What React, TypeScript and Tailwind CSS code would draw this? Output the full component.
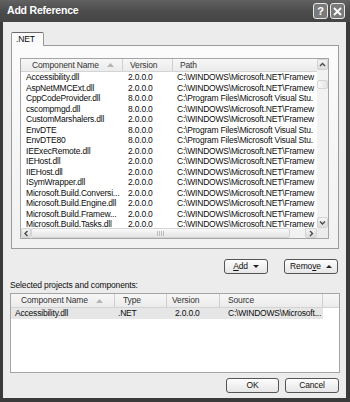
import React from "react";

const refs: [string, string, string][] = [
  ["Accessibility.dll", "2.0.0.0", "C:\\WINDOWS\\Microsoft.NET\\Framew"],
  ["AspNetMMCExt.dll", "2.0.0.0", "C:\\WINDOWS\\Microsoft.NET\\Framew"],
  ["CppCodeProvider.dll", "8.0.0.0", "C:\\Program Files\\Microsoft Visual Stu."],
  ["cscompmgd.dll", "8.0.0.0", "C:\\WINDOWS\\Microsoft.NET\\Framew"],
  ["CustomMarshalers.dll", "2.0.0.0", "C:\\WINDOWS\\Microsoft.NET\\Framew"],
  ["EnvDTE", "8.0.0.0", "C:\\Program Files\\Microsoft Visual Stu."],
  ["EnvDTE80", "8.0.0.0", "C:\\Program Files\\Microsoft Visual Stu."],
  ["IEExecRemote.dll", "2.0.0.0", "C:\\WINDOWS\\Microsoft.NET\\Framew"],
  ["IEHost.dll", "2.0.0.0", "C:\\WINDOWS\\Microsoft.NET\\Framew"],
  ["IIEHost.dll", "2.0.0.0", "C:\\WINDOWS\\Microsoft.NET\\Framew"],
  ["ISymWrapper.dll", "2.0.0.0", "C:\\WINDOWS\\Microsoft.NET\\Framew"],
  ["Microsoft.Build.Conversi...", "2.0.0.0", "C:\\WINDOWS\\Microsoft.NET\\Framew"],
  ["Microsoft.Build.Engine.dll", "2.0.0.0", "C:\\WINDOWS\\Microsoft.NET\\Framew"],
  ["Microsoft.Build.Framew...", "2.0.0.0", "C:\\WINDOWS\\Microsoft.NET\\Framew"],
  ["Microsoft.Build.Tasks.dll", "2.0.0.0", "C:\\WINDOWS\\Microsoft.NET\\Framew"],
];

function SortArrow() {
  return (
    <svg width="7" height="4" viewBox="0 0 7 4" className="ml-[8px]">
      <path d="M0 4 L3.5 0 L7 4 Z" fill="#b4b4b4" />
    </svg>
  );
}

function Chevron({ dir }: { dir: "up" | "down" | "left" | "right" }) {
  const d = {
    up: "M1 4 L3.5 1.5 L6 4",
    down: "M1 1.5 L3.5 4 L6 1.5",
    left: "M4.5 1 L2 3.5 L4.5 6",
    right: "M2 1 L4.5 3.5 L2 6",
  }[dir];
  const vertical = dir === "up" || dir === "down";
  return (
    <svg
      width={vertical ? 7 : 6}
      height={vertical ? 6 : 7}
      viewBox={vertical ? "0 0 7 6" : "0 0 6 7"}
    >
      <path d={d} fill="none" stroke="#4a4a4a" strokeWidth="1.4" />
    </svg>
  );
}

function ScrollBtn({ dir, className }: { dir: "up" | "down" | "left" | "right"; className: string }) {
  return (
    <div
      className={`flex items-center justify-center rounded-[2px] border border-[#d2d2d2] bg-gradient-to-b from-[#f4f4f4] to-[#dcdcdc] ${className}`}
    >
      <Chevron dir={dir} />
    </div>
  );
}

function PushButton({ children, className }: { children: React.ReactNode; className: string }) {
  return (
    <div
      className={`flex h-[15px] items-center justify-center rounded-[3px] border border-[#555] bg-gradient-to-b from-[#fdfdfd] to-[#e6e6e6] text-[8.5px] text-[#111] ${className}`}
    >
      {children}
    </div>
  );
}

export default function App() {
  return (
    <div className="flex h-[402px] w-[350px] flex-col overflow-hidden bg-[#3a3a3a] font-['Liberation_Sans',Arial,sans-serif] text-[8.5px] tracking-[-0.15px] text-[#0d0d0d]">
      {/* title bar */}
      <div className="flex h-[22px] shrink-0 items-center bg-gradient-to-b from-[#626262] via-[#4c4c4c] to-[#454545] pl-[7px] pr-[5px]">
        <span className="text-[10.5px] font-bold tracking-[-0.2px] text-white">Add Reference</span>
        <div className="ml-auto flex gap-[2px]">
          <div className="flex h-[16px] w-[15px] items-center justify-center rounded-[3px] border border-[#e8e8e8] bg-[#7a7a7a] text-[11px] font-bold leading-none text-white">
            ?
          </div>
          <div className="flex h-[16px] w-[15px] items-center justify-center rounded-[3px] border border-[#e8e8e8] bg-[#7a7a7a]">
            <svg width="9" height="9" viewBox="0 0 9 9">
              <path d="M1 1 L8 8 M8 1 L1 8" stroke="#fff" strokeWidth="1.8" />
            </svg>
          </div>
        </div>
      </div>

      {/* dialog body */}
      <div className="mb-[4px] ml-[3px] mr-[4px] flex flex-1 flex-col bg-[#ececec]">
        <div className="pl-[8px] pr-[7px] pt-[10px]">
          {/* tab strip */}
          <div className="flex">
            <div className="relative z-10 -mb-px flex h-[14px] w-[33px] items-center rounded-t-[2px] border border-b-0 border-[#9a9a9a] border-t-[#6a6a6a] bg-[#fafafa] pl-[4px] text-[8.5px]">
              .NET
            </div>
          </div>
          {/* tab page */}
          <div className="h-[204px] border border-[#9a9a9a] bg-gradient-to-b from-[#fbfbfb] to-[#f1f1f1] pb-[9px] pl-[8px] pr-[9px] pt-[12px]">
            <div className="flex h-[181px] border border-[#a5a5a5] bg-white">
              <div className="flex min-w-0 flex-1 flex-col">
                {/* header */}
                <div className="flex h-[13px] shrink-0 border-b border-[#d4d4d4] bg-gradient-to-b from-[#f7f7f7] to-[#ebebeb] text-[#333]">
                  <div className="flex w-[102px] items-center border-r border-[#cfcfcf] pl-[11px]">
                    Component Name
                    <SortArrow />
                  </div>
                  <div className="flex w-[50px] items-center border-r border-[#cfcfcf] pl-[7px]">Version</div>
                  <div className="flex flex-1 items-center pl-[7px]">Path</div>
                </div>
                {/* rows */}
                <div className="flex-1 overflow-hidden tracking-[-0.2px]">
                  {refs.map(([name, ver, path]) => (
                    <div key={name} className="flex h-[10.5px] items-center whitespace-nowrap leading-[10.5px]">
                      <div className="w-[102px] overflow-hidden pl-[5px]">{name}</div>
                      <div className="w-[50px] overflow-hidden pl-[5px]">{ver}</div>
                      <div className="flex-1 overflow-hidden pl-[4px]">{path}</div>
                    </div>
                  ))}
                </div>
                {/* horizontal scrollbar */}
                <div className="flex h-[10px] shrink-0 items-stretch bg-[#f2f2f2]">
                  <ScrollBtn dir="left" className="w-[10px]" />
                  <div className="flex w-[259px] items-center justify-center rounded-[2px] border border-[#d6d6d6] bg-gradient-to-b from-[#fafafa] to-[#e4e4e4]">
                    <div className="flex gap-[1px]">
                      <div className="h-[5px] w-px bg-[#bdbdbd]" />
                      <div className="h-[5px] w-px bg-[#bdbdbd]" />
                      <div className="h-[5px] w-px bg-[#bdbdbd]" />
                      <div className="h-[5px] w-px bg-[#bdbdbd]" />
                    </div>
                  </div>
                  <div className="flex-1" />
                  <ScrollBtn dir="right" className="w-[12px]" />
                </div>
              </div>
              {/* vertical scrollbar */}
              <div className="flex w-[11px] shrink-0 flex-col bg-[#f2f2f2]">
                <ScrollBtn dir="up" className="h-[11px]" />
                <div className="flex-1 pt-[10px]">
                  <div className="h-[9px] rounded-[2px] border border-[#d6d6d6] bg-gradient-to-r from-[#fafafa] to-[#e4e4e4]" />
                </div>
                <ScrollBtn dir="down" className="h-[11px]" />
                <div className="h-[10px] bg-[#ececec]" />
              </div>
            </div>
          </div>
        </div>

        {/* add / remove */}
        <div className="mt-[10px] flex justify-end gap-[16px] pr-[8px]">
          <PushButton className="w-[44px] gap-[5px]">
            <span>
              <span className="underline">A</span>dd
            </span>
            <svg width="6" height="3" viewBox="0 0 6 3">
              <path d="M0 0 L6 0 L3 3 Z" fill="#222" />
            </svg>
          </PushButton>
          <PushButton className="w-[54px] gap-[5px]">
            <span>
              Remo<span className="underline">v</span>e
            </span>
            <svg width="6" height="3" viewBox="0 0 6 3">
              <path d="M0 3 L6 3 L3 0 Z" fill="#222" />
            </svg>
          </PushButton>
        </div>

        <div className="mt-[6px] pl-[7px] leading-[10px]">Selected projects and components:</div>

        {/* selected list */}
        <div className="ml-[7px] mr-[6px] mt-[3px] h-[80px] border border-[#a5a5a5] bg-white">
          <div className="flex h-[14px] border-b border-[#d4d4d4] bg-gradient-to-b from-[#f7f7f7] to-[#ebebeb] text-[#333]">
            <div className="flex w-[104px] items-center border-r border-[#cfcfcf] pl-[10px]">
              Component Name
              <SortArrow />
            </div>
            <div className="flex w-[52px] items-center border-r border-[#cfcfcf] pl-[8px]">Type</div>
            <div className="flex w-[53px] items-center border-r border-[#cfcfcf] pl-[5px]">Version</div>
            <div className="flex w-[103px] items-center border-r border-[#cfcfcf] pl-[8px]">Source</div>
            <div className="flex-1" />
          </div>
          <div className="flex h-[11px] w-[312px] items-center whitespace-nowrap bg-[#e6e6e6] leading-[11px] tracking-[-0.2px]">
            <div className="w-[104px] pl-[4px]">Accessibility.dll</div>
            <div className="w-[52px] pl-[3px]">.NET</div>
            <div className="w-[53px] pl-[8px]">2.0.0.0</div>
            <div className="w-[103px] overflow-hidden pl-[8px]">C:\WINDOWS\Microsoft...</div>
          </div>
        </div>

        {/* ok / cancel */}
        <div className="mt-[5px] flex justify-end gap-[6px] pr-[7px]">
          <PushButton className="w-[53px]">OK</PushButton>
          <PushButton className="w-[54px]">Cancel</PushButton>
        </div>
      </div>
    </div>
  );
}
